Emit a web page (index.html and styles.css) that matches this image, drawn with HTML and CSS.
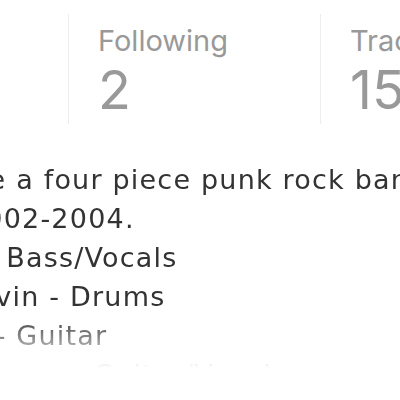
FILE: index.html
```
<!DOCTYPE html>
<html lang="en">
<head>
<meta charset="utf-8">
<link rel="stylesheet" href="styles.css">
</head>
<body>
<div class="profile">
  <div class="stats">
    <div class="stat">
      <div class="stat-label">Followers</div>
      <div class="stat-value">112</div>
    </div>
    <div class="stat">
      <div class="stat-label">Following</div>
      <div class="stat-value">2</div>
    </div>
    <div class="stat">
      <div class="stat-label">Tracks</div>
      <div class="stat-value">15</div>
    </div>
  </div>
  <div class="bio">
    <div class="bio-line">They were a four piece punk rock band from Sydney,</div>
    <div class="bio-line">around 2002-2004.</div>
    <div class="bio-line">Stephen - Bass/Vocals</div>
    <div class="bio-line">Andrew Irvin - Drums</div>
    <div class="bio-line">Cameron - Guitar</div>
    <div class="bio-line">Adam Johnson - Guitar/Vocals</div>
  </div>
</div>
</body>
</html>
```
FILE: styles.css
```
html, body {
  margin: 0;
  padding: 0;
  background: #ffffff;
  overflow: hidden;
}

body {
  font-family: Inter, "Noto Sans", sans-serif;
  width: 400px;
  height: 400px;
}

.profile {
  margin-left: -184px;
  width: 900px;
}

.stats {
  display: flex;
  padding-top: 14px;
}

.stat {
  box-sizing: border-box;
  width: 252px;
  height: 110px;
  padding-left: 29px;
  padding-top: 9px;
  border-left: 1px solid #ededed;
}

.stat:first-child {
  border-left: 0;
}

.stat-label {
  font-size: 29px;
  line-height: 35px;
  color: #999999;
  white-space: nowrap;
}

.stat-value {
  margin-top: 5px;
  font-size: 54px;
  line-height: 54px;
  color: #999999;
}

.bio {
  margin-left: 39px;
  margin-top: 36px;
  font-family: "DejaVu Sans", Verdana, sans-serif;
  font-size: 27px;
  letter-spacing: 1.2px;
  line-height: 39px;
  color: #333333;
  height: 212px;
  overflow: hidden;
  -webkit-mask-image: linear-gradient(to bottom, #000 0, #000 155px, transparent 208px);
  mask-image: linear-gradient(to bottom, #000 0, #000 155px, transparent 208px);
}

.bio-line {
  white-space: nowrap;
}
```
